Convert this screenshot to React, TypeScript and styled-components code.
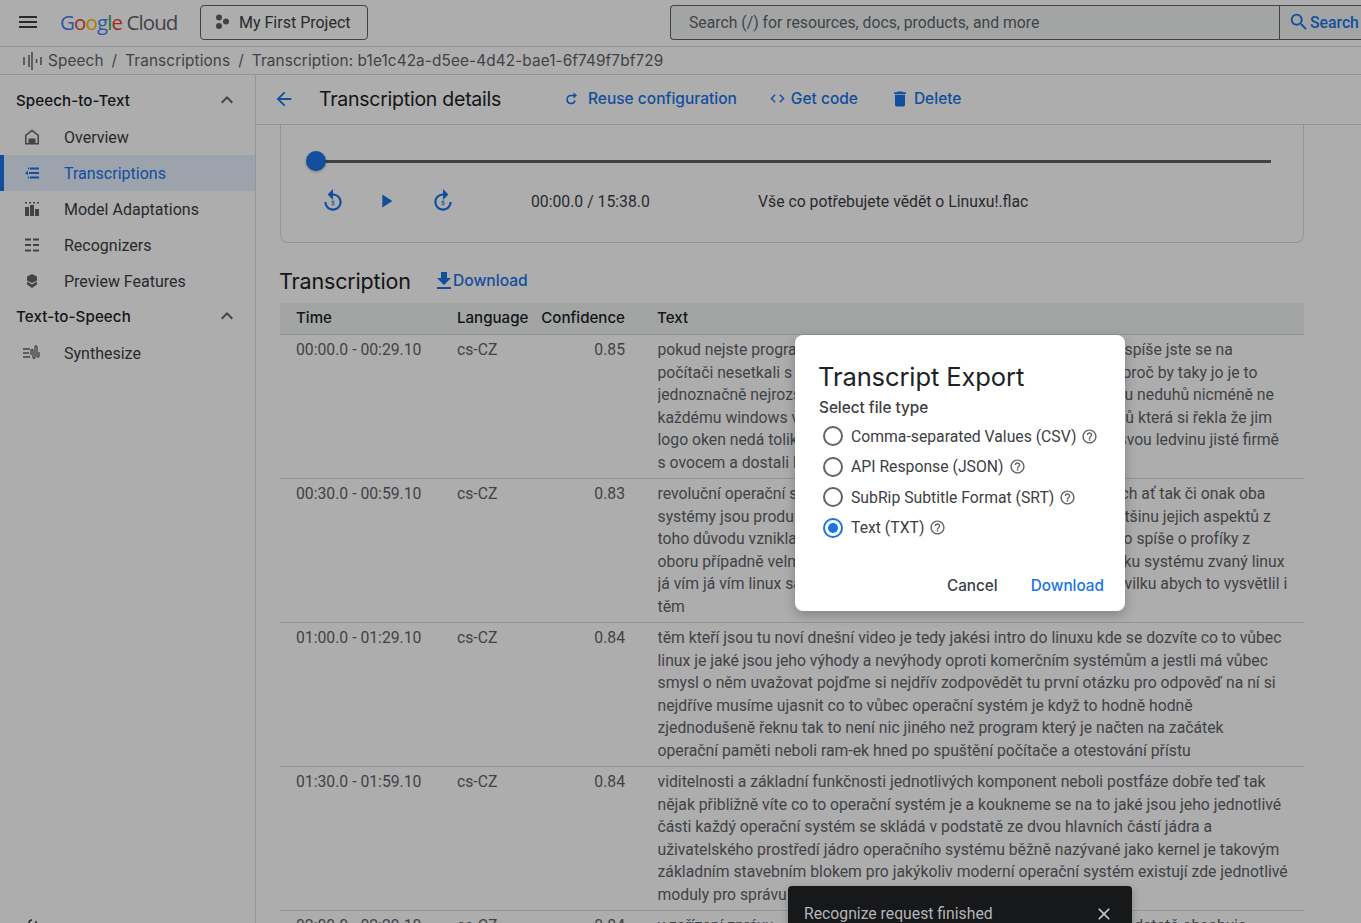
import React from 'react';
import styled, { createGlobalStyle } from 'styled-components';
import {
  MdArrowBack, MdClose, MdCode, MdDelete, MdExpandLess, MdFileDownload, MdForward5,
  MdHelpOutline, MdMenu, MdPlayArrow, MdReplay5, MdSearch,
} from 'react-icons/md';

const SANS = `"Inter", "Open Sans", sans-serif`;
const BODY = `"Roboto", "Liberation Sans", sans-serif`;

const Global = createGlobalStyle`
  html, body { margin: 0; padding: 0; height: 100%; background: #fff; overflow: hidden; }
  #root { height: 100%; }
  * { box-sizing: border-box; }
`;

const Page = styled.div`
  position: relative; height: 100vh; overflow: hidden; display: flex; flex-direction: column;
  background: #fff; font-family: ${BODY}; color: #202124;
`;
const TopBar = styled.header`
  flex: 0 0 47px; display: flex; align-items: center; border-bottom: 1px solid #dadce0; padding-bottom: 2px; overflow: hidden;
`;
const MenuButton = styled.div`
  flex: none; width: 56px; display: flex; justify-content: center; color: #3c4043; font-size: 24px;
  svg { display: block; }
`;
const Logo = styled.div`
  flex: none; width: 144px; padding-left: 4px; font-family: "Open Sans", sans-serif; font-size: 20.5px; letter-spacing: -.9px; color: #5f6368; white-space: nowrap;
`;
const Letter = styled.span<{ $c: string }>`color: ${p => p.$c};`;
const ProjectButton = styled.div`
  flex: none; width: 168px; height: 35px; display: flex; align-items: center; border: 1px solid #5f6368; border-radius: 4px;
  padding-left: 13px; gap: 9px; font-size: 16px; color: #3c4043;
`;
const SearchBox = styled.div`
  flex: none; margin-left: 302px; width: 609px; height: 35px; display: flex; align-items: center; background: #f1f3f4;
  border: 1px solid #5f6368; border-right: none; border-radius: 4px 0 0 4px; padding-left: 18px; font-size: 15.75px; color: #5f6368;
`;
const SearchButton = styled.div`
  flex: none; width: 100px; height: 35px; display: flex; align-items: center; gap: 0; padding-left: 8px; background: #f1f3f4;
  border: 1px solid #5f6368; font-size: 15.75px; font-weight: 500; color: #1a73e8;
  svg { flex: none; }
`;
const Crumbs = styled.nav`
  flex: 0 0 28px; display: flex; align-items: center; padding-left: 22px; border-bottom: 1px solid #dadce0;
  font-family: ${SANS}; font-size: 15.35px; color: #5f6368; white-space: nowrap; letter-spacing: .1px;
`;
const CrumbIcon = styled.svg`width: 20px; height: 18px; margin-right: 6px; flex: none;`;
const CrumbSep = styled.span`margin: 0 8px;`;
const Body = styled.div`flex: 1; min-height: 0; display: flex;`;
const Sidebar = styled.aside`
  flex: 0 0 256px; border-right: 1px solid #dadce0; display: flex; flex-direction: column; overflow: hidden; padding-top: 8px;
`;
const SideHead = styled.div`
  height: 36px; display: flex; align-items: center; justify-content: space-between; padding: 0 16px 2px 16px;
  font-family: ${SANS}; font-size: 15.1px; font-weight: 500; color: #202124; letter-spacing: .1px;
  svg { font-size: 24px; color: #5f6368; }
`;
const SideItem = styled.div<{ $active?: boolean }>`
  height: 36px; display: flex; align-items: center; padding-left: ${p => (p.$active ? '20px' : '24px')}; gap: 24px; font-size: 16px;
  color: ${p => (p.$active ? '#1a73e8' : '#3c4043')};
  background: ${p => (p.$active ? '#e8f0fe' : 'transparent')};
  border-left: ${p => (p.$active ? '4px solid #1a73e8' : 'none')};
`;
const NavIcon = styled.svg`width: 16px; height: 16px; flex: none;`;
const WideNavIcon = styled.svg`width: 18px; height: 16px; flex: none; margin: 0 -1px 0 -1px;`;
const SideFoot = styled.svg`margin: auto 0 -10px 27px; width: 12px; height: 14px; flex: none;`;

const Main = styled.main`flex: 1; min-width: 0; display: flex; flex-direction: column; overflow: hidden;`;
const DetailBar = styled.div`
  flex: 0 0 50px; display: flex; align-items: center; border-bottom: 1px solid #dadce0; padding: 0 0 2px 17px;
`;
const BackIcon = styled.span`font-size: 22px; color: #1a73e8; display: flex; margin-right: 25px;`;
const DetailTitle = styled.h1`
  margin: 0 62px 0 -1px; width: 183px; font-family: ${SANS}; font-size: 19.5px; font-weight: 400; letter-spacing: -.25px; color: #202124; white-space: nowrap;
`;
const ActionLink = styled.div<{ $gap: number; $after: number }>`
  display: flex; align-items: center; gap: ${p => p.$gap}px; margin-right: ${p => p.$after}px; font-family: ${SANS};
  font-size: 15.5px; font-weight: 500; color: #1a73e8; white-space: nowrap; svg { flex: none; }
`;
const Content = styled.div`flex: 1; min-height: 0; padding-left: 24px; width: 1048px;`;
const Player = styled.section`
  height: 118px; border: 1px solid #dadce0; border-top: none; border-radius: 0 0 8px 8px; padding: 25px 32px 0 25px;
`;
const Track = styled.div`position: relative; height: 3px; margin-top: 10px; margin-left: 10px; background: #5f6368;`;
const Thumb = styled.div`
  position: absolute; left: -10px; top: -9px; width: 20px; height: 20px; border-radius: 50%; background: #1a73e8;
  box-shadow: 0 1px 3px rgba(0,0,0,.3);
`;
const Controls = styled.div`display: flex; align-items: center; height: 26px; margin-top: 25px; font-size: 15.75px; color: #3c4043; white-space: nowrap;`;
const Ctl = styled.span<{ $w: number; $size: number }>`display: flex; justify-content: center; width: ${p => p.$w}px; color: #1a73e8; font-size: ${p => p.$size}px;`;
const Time = styled.span`margin-left: 57px; width: 227px;`;
const SectionHead = styled.div`display: flex; align-items: center; height: 60px; padding-top: 15px;`;
const SectionTitle = styled.h2`
  margin: 0 0 0 -1px; width: 158px; font-family: ${SANS}; font-size: 21.5px; font-weight: 400; letter-spacing: -.15px; color: #202124;
`;
const DownloadLink = styled.div`
  display: flex; align-items: center; font-family: ${SANS}; font-size: 15.6px; font-weight: 500; color: #1a73e8; svg { font-size: 24px; margin: 0 -3px 0 -5px; }
`;
const Row = styled.div`
  display: grid; grid-template-columns: 161px 84px 116px 663px; border-bottom: 1px solid #dadce0;
`;
const HeadRow = styled(Row)`
  height: 32px; padding-bottom: 2px; align-items: center; background: #f1f3f4; font-family: ${SANS}; font-size: 15.1px; font-weight: 500; color: #202124;
`;
const DataRow = styled(Row)`height: 144px; padding-top: 4px; font-size: 15.75px; line-height: 22.5px; color: #5f6368;`;
const Cell = styled.div<{ $right?: boolean }>`
  padding: 0 ${p => (p.$right ? '16px' : '0')} 0 16px; text-align: ${p => (p.$right ? 'right' : 'left')}; white-space: nowrap;
`;
const TextCell = styled.div`padding-left: 16.5px; white-space: nowrap;`;
const Line = styled.div<{ $start?: number }>`
  display: grid; grid-template-columns: ${p => (p.$start ? `${p.$start - 658}px auto` : 'auto')}; height: 22.5px;
`;
const Clip = styled.span`overflow: hidden;`;

const Scrim = styled.div`position: absolute; inset: 0; background: rgba(0,0,0,.32);`;
const Dialog = styled.div`
  position: absolute; left: 795px; top: 335px; width: 330px; height: 276px; background: #fff; border-radius: 8px;
  padding: 24px 21px 0 24px; box-shadow: 0 4px 12px rgba(0,0,0,.25); display: flex; flex-direction: column;
`;
const DialogTitle = styled.h3`
  margin: 0 0 0 -1px; height: 36px; font-family: ${SANS}; font-size: 25.5px; line-height: 36px; font-weight: 400; letter-spacing: -.1px; color: #202124; white-space: nowrap;
`;
const FieldLabel = styled.div`
  margin-top: 3px; height: 20px; font-family: ${SANS}; font-size: 15.3px; line-height: 20px; font-weight: 500; color: #3c4043;
`;
const Option = styled.label`
  display: flex; align-items: center; height: 30.5px; font-size: 15.75px; color: #3c4043; white-space: nowrap; padding-left: 4px;
  svg { color: #5f6368; font-size: 17px; margin-left: 5px; }
`;
const Radio = styled.span<{ $on?: boolean }>`
  width: 20px; height: 20px; border-radius: 50%; border: 2px solid ${p => (p.$on ? '#1a73e8' : '#5f6368')}; margin-right: 8px; display: flex;
  align-items: center; justify-content: center; flex: none;
  &::after { content: ''; width: 10px; height: 10px; border-radius: 50%; background: ${p => (p.$on ? '#1a73e8' : 'transparent')}; }
`;
const Options = styled.div`margin-top: 3px;`;
const DialogActions = styled.div`
  margin-top: auto; height: 35px; display: flex; justify-content: flex-end; gap: 33px;
  font-family: ${SANS}; font-size: 15.3px; font-weight: 500; line-height: 20px;
`;
const CancelBtn = styled.span`color: #3c4043;`;
const ConfirmBtn = styled.span`color: #1a73e8;`;
const Toast = styled.div`
  position: absolute; left: 788px; top: 886px; width: 344px; height: 60px; background: #17181a; border-radius: 4px; color: #b5b5b7;
  font-size: 15.75px; display: flex; justify-content: space-between; padding: 18px 18px 0 16px; box-shadow: 0 3px 8px rgba(0,0,0,.25);
  svg { font-size: 20px; color: #c8c8c8; }
`;

type Rec = { time: string; conf: string; lines: [string, string?, number?][] };
const rows: Rec[] = [
  { time: '00:00.0 - 00:29.10', conf: '0.85', lines: [
    ['pokud nejste programátoři', 'spíše jste se na', 1125],
    ['počítači nesetkali s', 'proč by taky jo je to', 1123],
    ['jednoznačně nejrozšířenější', 'u neduhů nicméně ne', 1125],
    ['každému windows vyhovují', 'lů která si řekla že jim', 1122],
    ['logo oken nedá tolik', 'svou ledvinu jisté firmě', 1119],
    ['s ovocem a dostali lepší'],
  ] },
  { time: '00:30.0 - 00:59.10', conf: '0.83', lines: [
    ['revoluční operační systém', 'ch ať tak či onak oba', 1121],
    ['systémy jsou produkty', 'většinu jejich aspektů z', 1109],
    ['toho důvodu vznikla', 'to spíše o profíky z', 1119],
    ['oboru případně velmi', 'ku systému zvaný linux', 1124],
    ['já vím já vím linux sám', 'vilku abych to vysvětlil i', 1125],
    ['těm'],
  ] },
  { time: '01:00.0 - 01:29.10', conf: '0.84', lines: [
    ['těm kteří jsou tu noví dnešní video je tedy jakési intro do linuxu kde se dozvíte co to vůbec'],
    ['linux je jaké jsou jeho výhody a nevýhody oproti komerčním systémům a jestli má vůbec'],
    ['smysl o něm uvažovat pojďme si nejdřív zodpovědět tu první otázku pro odpověď na ní si'],
    ['nejdříve musíme ujasnit co to vůbec operační systém je když to hodně hodně'],
    ['zjednodušeně řeknu tak to není nic jiného než program který je načten na začátek'],
    ['operační paměti neboli ram-ek hned po spuštění počítače a otestování přístu'],
  ] },
  { time: '01:30.0 - 01:59.10', conf: '0.84', lines: [
    ['viditelnosti a základní funkčnosti jednotlivých komponent neboli postfáze dobře teď tak'],
    ['nějak přibližně víte co to operační systém je a koukneme se na to jaké jsou jeho jednotlivé'],
    ['části každý operační systém se skládá v podstatě ze dvou hlavních částí jádra a'],
    ['uživatelského prostředí jádro operačního systému běžně nazývané jako kernel je takovým'],
    ['základním stavebním blokem pro jakýkoliv moderní operační systém existují zde jednotlivé'],
    ['moduly pro správu'],
  ] },
  { time: '02:00.0 - 02:29.10', conf: '0.84', lines: [
    ['v zařízení zprávu', 'podstatě obsahuje', 1117],
  ] },
];

const GLetters: [string, string][] = [['G', '#4285f4'], ['o', '#ea4335'], ['o', '#fbbc05'], ['g', '#4285f4'], ['l', '#34a853'], ['e', '#ea4335']];

export default function App() {
  return (
    <Page>
      <Global />
      <TopBar>
        <MenuButton><MdMenu /></MenuButton>
        <Logo>
          {GLetters.map(([l, c], i) => <Letter key={i} $c={c}>{l}</Letter>)} Cloud
        </Logo>
        <ProjectButton>
          <svg width="16" height="16" viewBox="0 0 16 16" fill="#5f6368"><circle cx="5" cy="3.5" r="3" /><circle cx="12" cy="7.500" r="3" /><circle cx="5" cy="12" r="3" /></svg>
          My First Project
        </ProjectButton>
        <SearchBox>Search (/) for resources, docs, products, and more</SearchBox>
        <SearchButton><MdSearch size={22} />Search</SearchButton>
      </TopBar>
      <Crumbs>
        <CrumbIcon viewBox="0 0 20 18" stroke="#5f6368" strokeWidth="1.5">
          <path d="M2 5v8M7 3v12M10 0v18M14.5 7v4M19 5v8" />
        </CrumbIcon>
        Speech<CrumbSep>/</CrumbSep>Transcriptions<CrumbSep>/</CrumbSep>Transcription: b1e1c42a-d5ee-4d42-bae1-6f749f7bf729
      </Crumbs>
      <Body>
        <Sidebar>
          <SideHead>Speech-to-Text<MdExpandLess /></SideHead>
          <SideItem>
            <NavIcon viewBox="0 0 16 16" fill="#5f6368"><path d="M8 .5 1 6v9.500h14V6L8 .5Zm5.500 13.500h-2V9.500h-7V14h-2V6.800L8 2.400l5.500 4.400V14Z" /></NavIcon>
            Overview
          </SideItem>
          <SideItem $active>
            <NavIcon viewBox="0 0 16 16" fill="#1a73e8"><path d="M6 2.500h9v2H6zM4 2.500h1.200v2H4zM1 8l3-2.200v4.400zM5 7h10v2H5zM6 11.500h9v2H6zM4 11.500h1.200v2H4z" /></NavIcon>
            Transcriptions
          </SideItem>
          <SideItem>
            <NavIcon viewBox="0 0 16 16" fill="#5f6368"><path d="M1 1h2v1.500H1zM5 1h2v1.500H5zM9 1h2v1.500H9zM13 1h2v1.500h-2zM1 6h4v9H1zM6 4h4v11H6zM11 8h4v7h-4z" /></NavIcon>
            Model Adaptations
          </SideItem>
          <SideItem>
            <NavIcon viewBox="0 0 16 16" fill="#5f6368"><path d="M1 1.500h6v2H1zM9 1.500h6v2H9zM1 7h6v2H1zM9 7h6v2H9zM1 12.500h6v2H1zM9 12.500h6v2H9z" /></NavIcon>
            Recognizers
          </SideItem>
          <SideItem>
            <NavIcon viewBox="0 0 16 16" fill="#5f6368"><path d="M8 1 3 3.500v4L8 10l5-2.500v-4L8 1ZM3 8.500v3L8 15l5-3.500v-3L8 11.500 3 8.500Z" /></NavIcon>
            Preview Features
          </SideItem>
          <SideHead>Text-to-Speech<MdExpandLess /></SideHead>
          <SideItem>
            <WideNavIcon viewBox="0 0 18 16" fill="none" stroke="#5f6368" strokeWidth="1.3"><path d="M0 4h7M0 8h6M0 12h7M8 10V6c0-2 2-2 2 0v6c0 2 2 2 2 0V2c0-1.500 2-1.500 2 0v9c0 1.500 2 1.500 2 0V7" /></WideNavIcon>
            Synthesize
          </SideItem>
          <SideFoot viewBox="0 0 12 14" fill="none" stroke="#3c4043" strokeWidth="1.5"><path d="M2 14V4c0-2 1-3 3-3M0 6h5M9 14V2" /></SideFoot>
        </Sidebar>
        <Main>
          <DetailBar>
            <BackIcon><MdArrowBack /></BackIcon>
            <DetailTitle>Transcription details</DetailTitle>
            <ActionLink $gap={10} $after={32}>
              <svg width="14" height="14" viewBox="0 0 14 14" fill="none" stroke="currentColor" strokeWidth="1.5"><path d="M11 3.500H7a4 4 0 1 0 4 5" /><path fill="currentColor" stroke="none" d="M9.500 0.500 13 3.500 9.500 6.500Z" /></svg>
              Reuse configuration
            </ActionLink>
            <ActionLink $gap={5} $after={32}><MdCode size={17} />Get code</ActionLink>
            <ActionLink $gap={4} $after={0}><MdDelete size={20} />Delete</ActionLink>
          </DetailBar>
          <Content>
            <Player>
              <Track><Thumb /></Track>
              <Controls>
                <Ctl $w={54} $size={26}><MdReplay5 /></Ctl>
                <Ctl $w={52} $size={22}><MdPlayArrow /></Ctl>
                <Ctl $w={62} $size={26}><MdForward5 /></Ctl>
                <Time>00:00.0 / 15:38.0</Time>
                Vše co potřebujete vědět o Linuxu!.flac
              </Controls>
            </Player>
            <SectionHead>
              <SectionTitle>Transcription</SectionTitle>
              <DownloadLink><MdFileDownload />Download</DownloadLink>
            </SectionHead>
            <HeadRow>
              <Cell>Time</Cell><Cell>Language</Cell><Cell $right>Confidence</Cell><Cell>Text</Cell>
            </HeadRow>
            {rows.map(r => (
              <DataRow key={r.time}>
                <Cell>{r.time}</Cell>
                <Cell>cs-CZ</Cell>
                <Cell $right>{r.conf}</Cell>
                <TextCell>
                  {r.lines.map(([a, b, s], i) => (
                    <Line key={i} $start={s}><Clip>{a}</Clip>{b && <span>{b}</span>}</Line>
                  ))}
                </TextCell>
              </DataRow>
            ))}
          </Content>
        </Main>
      </Body>
      <Scrim />
      <Dialog>
        <DialogTitle>Transcript Export</DialogTitle>
        <FieldLabel>Select file type</FieldLabel>
        <Options>
          <Option><Radio />Comma-separated Values (CSV)<MdHelpOutline /></Option>
          <Option><Radio />API Response (JSON)<MdHelpOutline /></Option>
          <Option><Radio />SubRip Subtitle Format (SRT)<MdHelpOutline /></Option>
          <Option><Radio $on />Text (TXT)<MdHelpOutline /></Option>
        </Options>
        <DialogActions><CancelBtn>Cancel</CancelBtn><ConfirmBtn>Download</ConfirmBtn></DialogActions>
      </Dialog>
      <Toast>Recognize request finished<MdClose /></Toast>
    </Page>
  );
}
